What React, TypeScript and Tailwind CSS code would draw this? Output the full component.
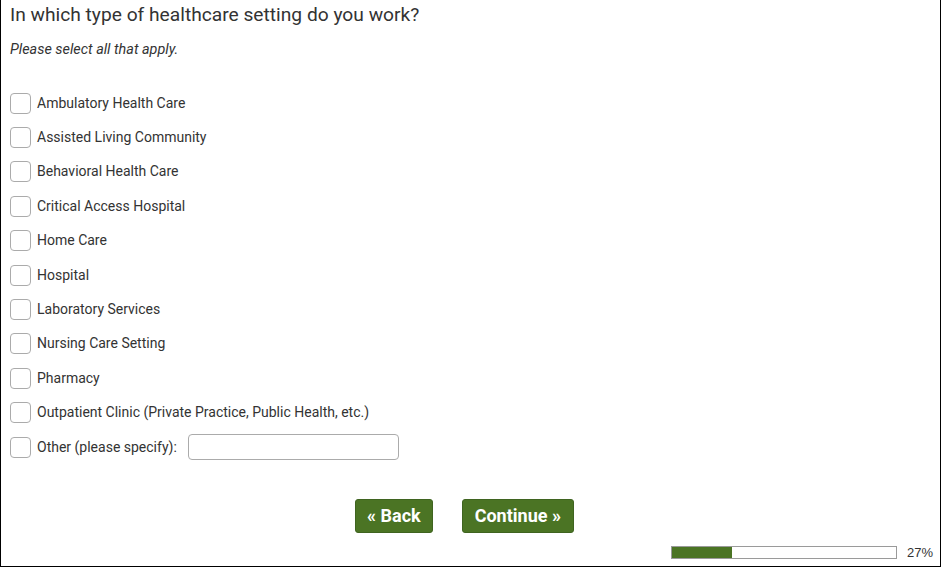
import React from "react";

const options = [
  "Ambulatory Health Care",
  "Assisted Living Community",
  "Behavioral Health Care",
  "Critical Access Hospital",
  "Home Care",
  "Hospital",
  "Laboratory Services",
  "Nursing Care Setting",
  "Pharmacy",
  "Outpatient Clinic (Private Practice, Public Health, etc.)",
];

function Box() {
  return <span className="block w-[21px] h-[21px] shrink-0 rounded-[4px] border border-[#ababab] bg-white" />;
}

export default function App() {
  return (
    <div
      className="w-[941px] h-[567px] bg-white border-l border-r border-b border-black flex flex-col text-[#333]"
      style={{ fontFamily: "Roboto, 'Liberation Sans', sans-serif" }}
    >
      <div className="pl-[9px] pt-[3px] text-[19.2px] leading-[24px] text-[#333]">
        In which type of healthcare setting do you work?
      </div>
      <div className="pl-[9px] mt-[13px] text-[14.4px] leading-[20px] italic text-[#333]">
        Please select all that apply.
      </div>
      <div className="pl-[9px] mt-[26px] flex flex-col">
        {options.map((o) => (
          <div key={o} className="h-[34.4px] flex items-center gap-[6px] text-[14px]">
            <Box />
            <span>{o}</span>
          </div>
        ))}
        <div className="h-[34.4px] flex items-center gap-[6px] text-[14px]">
          <Box />
          <span>Other (please specify):</span>
          <span className="block ml-[5px] w-[211px] h-[26px] rounded-[4px] border border-[#ababab] bg-white" />
        </div>
      </div>
      <div className="mt-[35px] flex justify-center gap-[29px] pr-[12px]">
        <button className="h-[34px] px-[11px] rounded-[3px] bg-[#4b7424] border border-[#3f6420] text-white font-bold text-[18px] leading-none">
          « Back
        </button>
        <button className="h-[34px] px-[12px] rounded-[3px] bg-[#4b7424] border border-[#3f6420] text-white font-bold text-[18px] leading-none">
          Continue »
        </button>
      </div>
      <div className="mt-[13px] flex items-center justify-end pr-[7px] gap-[10px]">
        <div className="w-[226px] h-[13px] border border-[#9a9a9a] bg-white">
          <div className="h-full bg-[#4b7424]" style={{ width: "27%" }} />
        </div>
        <span className="text-[13px] leading-[13px] text-[#333]" style={{ fontFamily: "'Liberation Sans', Arial, sans-serif" }}>
          27%
        </span>
      </div>
    </div>
  );
}
